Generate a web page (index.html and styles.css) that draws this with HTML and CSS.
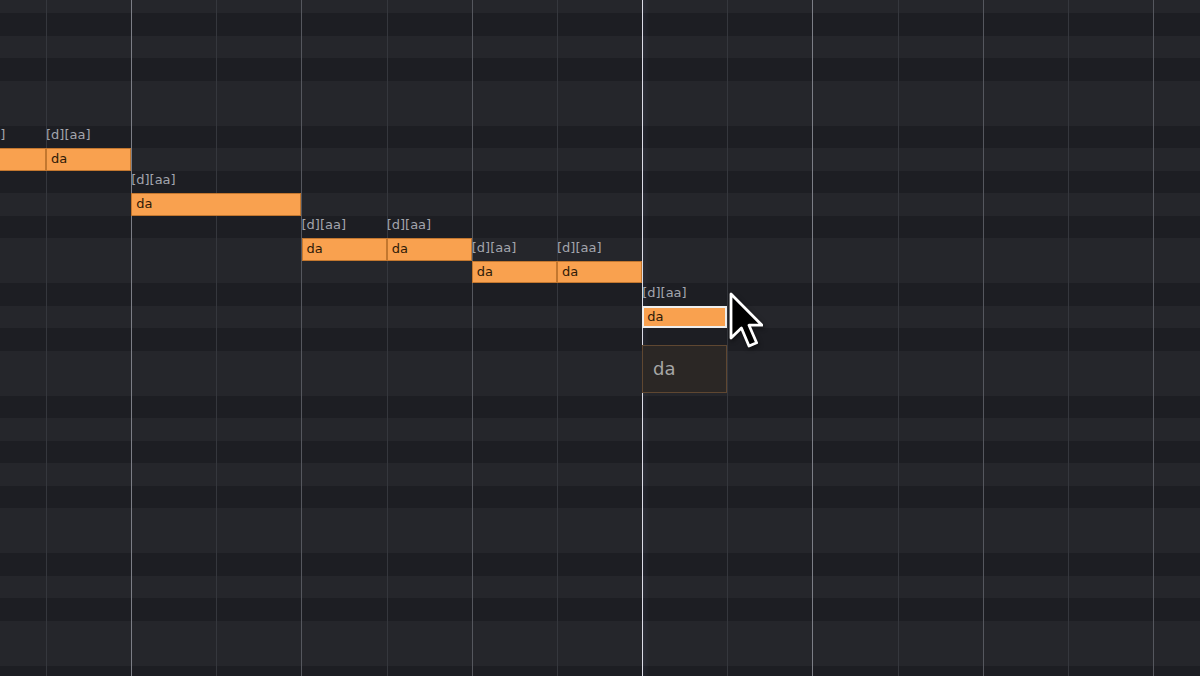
FILE: index.html
```html
<!DOCTYPE html>
<html lang="en">
<head>
    <meta charset="UTF-8">
    <meta name="viewport" content="width=device-width, initial-scale=1.0">
    <title>Piano Roll</title>
    <link rel="stylesheet" href="styles.css">
</head>
<body>
<div class="roll">
    <div class="rows">
        <div class="row white"></div>
        <div class="row black"></div>
        <div class="row white"></div>
        <div class="row black"></div>
        <div class="row white"></div>
        <div class="row white"></div>
        <div class="row black"></div>
        <div class="row white"></div>
        <div class="row black"></div>
        <div class="row white"></div>
        <div class="row black"></div>
        <div class="row white"></div>
        <div class="row white"></div>
        <div class="row black"></div>
        <div class="row white"></div>
        <div class="row black"></div>
        <div class="row white"></div>
        <div class="row white"></div>
        <div class="row black"></div>
        <div class="row white"></div>
        <div class="row black"></div>
        <div class="row white"></div>
        <div class="row black"></div>
        <div class="row white"></div>
        <div class="row white"></div>
        <div class="row black"></div>
        <div class="row white"></div>
        <div class="row black"></div>
        <div class="row white"></div>
        <div class="row white"></div>
        <div class="row black"></div>
    </div>

    <div class="cols">
        <div class="col sub"></div>
        <div class="col bar"></div>
        <div class="col sub"></div>
        <div class="col beat"></div>
        <div class="col sub"></div>
        <div class="col beat"></div>
        <div class="col sub"></div>
        <div class="col now"></div>
        <div class="col sub"></div>
        <div class="col bar"></div>
        <div class="col sub"></div>
        <div class="col beat"></div>
        <div class="col sub"></div>
        <div class="col beat"></div>
    </div>

    <div class="notes">
        <div class="note" style="left:-39.2px; top:148px; width:85.2px"><span class="phon">[d][aa]</span>da</div>
        <div class="note" style="left:46px; top:148px; width:85.2px"><span class="phon">[d][aa]</span>da</div>
        <div class="note" style="left:131.2px; top:193px; width:170.3px"><span class="phon">[d][aa]</span>da</div>
        <div class="note" style="left:301.5px; top:238px; width:85.2px"><span class="phon">[d][aa]</span>da</div>
        <div class="note" style="left:386.7px; top:238px; width:85.2px"><span class="phon">[d][aa]</span>da</div>
        <div class="note" style="left:471.8px; top:260.5px; width:85.2px"><span class="phon">[d][aa]</span>da</div>
        <div class="note" style="left:557px; top:260.5px; width:85.2px"><span class="phon">[d][aa]</span>da</div>
        <div class="note selected" style="left:642.2px; top:305.5px; width:85.2px"><span class="phon">[d][aa]</span>da</div>

        <div class="lyric-edit">da</div>

        <svg class="cursor" width="36" height="62" viewBox="0 0 18 31">
            <path d="M2 2 L2 24 L7.2 19 L11 28 L14.8 26.4 L11 17.6 L17.5 17.6 Z"
                  fill="#000" stroke="#fff" stroke-width="1.4" stroke-linejoin="round"/>
        </svg>
    </div>
</div>
</body>
</html>
```

FILE: styles.css
```css
body {
    margin: 0;
    background-color: #1e1f24;
    font-family: "DejaVu Sans", Arial, sans-serif;
    overflow: hidden;
}
.roll {
    position: relative;
    width: 1200px;
    height: 676px;
    overflow: hidden;
}
.rows {
    display: flex;
    flex-direction: column;
    margin-top: -9.5px;
}
.row {
    height: 22.5px;
    flex: none;
}
.row.white {
    background-color: #25262b;
}
.row.black {
    background-color: #1d1e23;
}
.cols {
    position: absolute;
    top: 0;
    bottom: 0;
    left: 46px;
    display: flex;
}
.col {
    position: relative;
    width: 85.17px;
    flex: none;
    box-sizing: border-box;
    border-left: 1px solid #35373d;
}
.col.beat {
    border-left-color: #55575e;
}
.col.bar {
    border-left-color: #7c7e86;
}
.col.now {
    border-left-color: #dcdce6;
}
.col.now::before {
    content: "";
    position: absolute;
    top: 0;
    bottom: 0;
    left: 0;
    width: 6px;
    background: linear-gradient(to right, rgba(90, 100, 150, 0.1), rgba(90, 100, 150, 0));
}
.notes {
    position: absolute;
    top: 0;
    left: 0;
    right: 0;
    bottom: 0;
}
.note {
    position: absolute;
    height: 22.5px;
    box-sizing: border-box;
    background-color: #f9a14f;
    border: 1px solid #c3772f;
    color: #2e1a08;
    font-size: 13px;
    line-height: 20px;
    padding-left: 4px;
}
.note.selected {
    border: 2px solid #eeeeee;
    line-height: 18px;
    padding-left: 3px;
}
.phon {
    position: absolute;
    left: -1px;
    top: -22px;
    line-height: 15px;
    color: #a3a5ad;
    white-space: nowrap;
}
.selected .phon {
    left: -2px;
    top: -23px;
}
.lyric-edit {
    position: absolute;
    left: 642px;
    top: 345px;
    width: 85px;
    height: 48px;
    box-sizing: border-box;
    background-color: #2b2725;
    border: 1px solid #5f4731;
    color: #a6a6a6;
    font-size: 18px;
    line-height: 46px;
    padding-left: 10px;
}
.cursor {
    position: absolute;
    left: 727px;
    top: 290px;
    filter: drop-shadow(1px 2px 2px rgba(0, 0, 0, 0.5));
}
```
